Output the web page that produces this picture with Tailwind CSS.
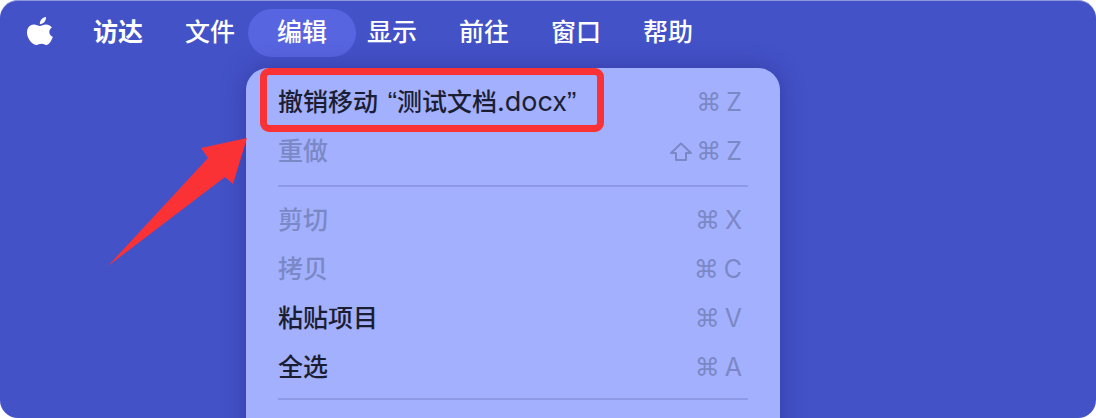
<!DOCTYPE html>
<html lang="zh-CN">
<head>
  <meta charset="UTF-8" />
  <script src="https://cdn.jsdelivr.net/npm/@tailwindcss/browser@4"></script>
  <title>Finder Edit Menu</title>
</head>
<body class="bg-white font-['Inter','Noto_Sans_CJK_SC',sans-serif]">

<div class="relative w-[1096px] h-[418px] overflow-hidden rounded-[18px] bg-[#4452c8] border-t border-[#8f98dc]">

  <!-- Menu bar -->
  <div class="flex items-center h-[48px] mt-[8px] pl-[27px] text-[25px] font-medium text-white">
    <svg class="w-[26px] h-[32px] mr-[40px]" viewBox="0 0 26 32" fill="#fff">
      <path d="M13 9c1.500 0 3.300-1.500 6-1.500 2.300 0 4.500 1 5.900 3-3.800 2.200-3.200 7.800.9 9.400-1 3-3.700 8-6.500 8-1.800 0-2.500-1.200-4.800-1.200-2.400 0-3.200 1.200-4.900 1.200C5.700 27.900 0 21.900 0 15.700 0 10.400 3.400 7.600 6.800 7.600c2.600 0 4.500 1.400 6.200 1.400z"/>
      <path d="M12.800 7.200C12.600 3.500 15.400.4 19 0c.3 3.800-2.800 7.100-6.200 7.200z"/>
    </svg>
    <span class="font-bold w-[51px]">访达</span>
    <span class="ml-[41px] w-[51px]">文件</span>
    <span class="flex items-center justify-center ml-[12px] w-[108px] h-[48px] rounded-[24px] bg-[#5865e0]">编辑</span>
    <div class="flex gap-[42px] ml-[11px]">
      <span>显示</span>
      <span>前往</span>
      <span>窗口</span>
      <span>帮助</span>
    </div>
  </div>

  <!-- Dropdown -->
  <div class="absolute left-[246px] top-[67px] w-[534px] h-[400px] rounded-[22px] bg-[#a3b0fd] pt-[10px] px-[32px] shadow-[0_0_24px_rgba(30,35,120,0.45)] text-[25px] font-medium text-[#1b1e33]">
    <div class="flex items-center justify-between h-[49px]">
      <span>撤销移动 <span class="ml-[3px] font-normal text-[28px] leading-none font-['Liberation_Sans']">“</span>测试文档<span class="font-normal text-[27px] leading-none">.docx</span><span class="font-normal text-[28px] leading-none font-['Liberation_Sans']">”</span></span>
      <span class="flex items-center gap-[5px] text-[#7b88c6] font-['DejaVu_Sans','Inter',sans-serif] text-[25px] font-normal pr-[6px]"><span>⌘</span><span class="font-['Inter'] text-[25px]">Z</span></span>
    </div>
    <div class="flex items-center justify-between h-[49px] text-[#7b88c6]">
      <span>重做</span>
      <span class="flex items-center gap-[5px] font-['DejaVu_Sans','Inter',sans-serif] text-[25px] font-normal pr-[6px]">
        <svg class="w-[24px] h-[20px] mr-[-2px]" viewBox="0 0 24 20" fill="none" stroke="#7b88c6" stroke-width="2" stroke-linejoin="round"><path d="M12 1.500 22 11h-5v7H7v-7H2z"/></svg>
        <span>⌘</span><span class="font-['Inter'] text-[25px]">Z</span>
      </span>
    </div>
    <div class="h-[2px] bg-[#8e9ae6] my-[9px]"></div>
    <div class="flex items-center justify-between h-[49px] text-[#7b88c6]">
      <span>剪切</span>
      <span class="flex items-center gap-[5px] font-['DejaVu_Sans','Inter',sans-serif] text-[25px] font-normal pr-[6px]"><span>⌘</span><span class="font-['Inter'] text-[25px]">X</span></span>
    </div>
    <div class="flex items-center justify-between h-[49px] text-[#7b88c6]">
      <span>拷贝</span>
      <span class="flex items-center gap-[5px] font-['DejaVu_Sans','Inter',sans-serif] text-[25px] font-normal pr-[6px]"><span>⌘</span><span class="font-['Inter'] text-[25px]">C</span></span>
    </div>
    <div class="flex items-center justify-between h-[49px]">
      <span>粘贴项目</span>
      <span class="flex items-center gap-[5px] text-[#7b88c6] font-['DejaVu_Sans','Inter',sans-serif] text-[25px] font-normal pr-[6px]"><span>⌘</span><span class="font-['Inter'] text-[25px]">V</span></span>
    </div>
    <div class="flex items-center justify-between h-[49px]">
      <span>全选</span>
      <span class="flex items-center gap-[5px] text-[#7b88c6] font-['DejaVu_Sans','Inter',sans-serif] text-[25px] font-normal pr-[6px]"><span>⌘</span><span class="font-['Inter'] text-[25px]">A</span></span>
    </div>
    <div class="h-[2px] bg-[#8e9ae6] mt-[6px]"></div>
  </div>

  <!-- Red annotation box -->
  <div class="absolute left-[260px] top-[67px] w-[344px] h-[64px] rounded-[9px] border-[7px] border-[#fb3235]"></div>

  <!-- Red annotation arrow -->
  <svg class="absolute left-0 top-[-1px] w-[300px] h-[300px]" viewBox="0 0 300 300">
    <polygon fill="#fb3235" points="247,138 201,148 208,158 108,266 225,177 233,184"/>
  </svg>
</div>

</body>
</html>
